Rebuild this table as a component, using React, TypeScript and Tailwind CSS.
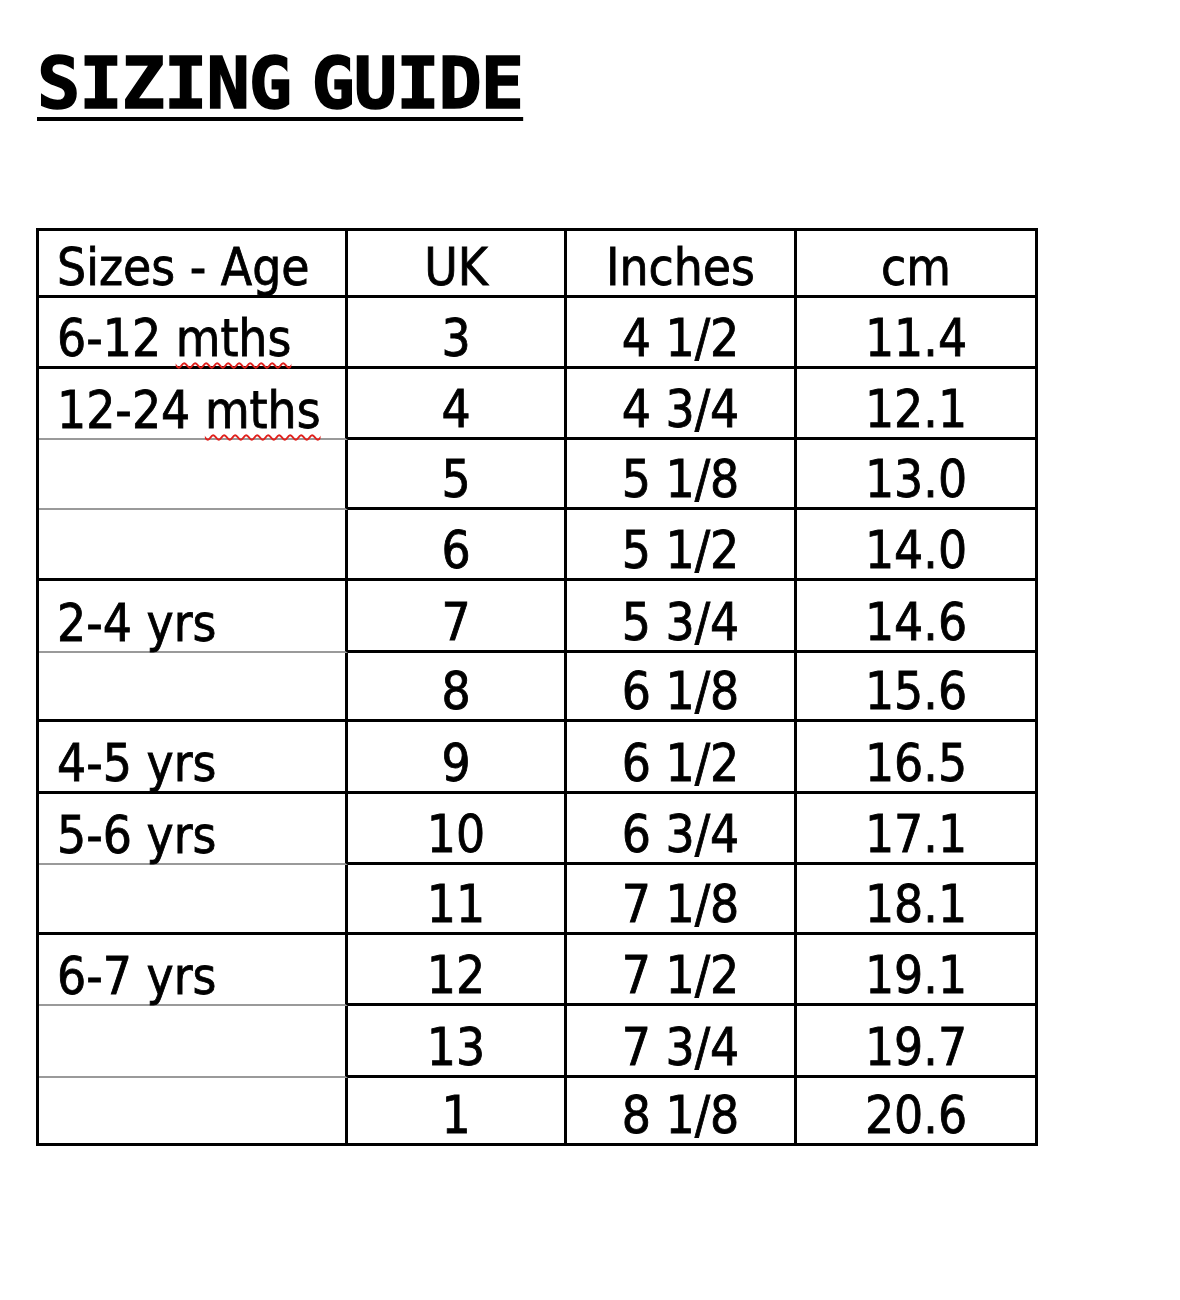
import React from "react";

type Row = {
  age?: string;
  uk: string;
  inches: string;
  cm: string;
  h: number;
  soft?: boolean; // grey line under the age cell
};

const rows: Row[] = [
  { age: "6-12 mths", uk: "3", inches: "4 1/2", cm: "11.4", h: 71 },
  { age: "12-24 mths", uk: "4", inches: "4 3/4", cm: "12.1", h: 71, soft: true },
  { uk: "5", inches: "5 1/8", cm: "13.0", h: 70, soft: true },
  { uk: "6", inches: "5 1/2", cm: "14.0", h: 71 },
  { age: "2-4 yrs", uk: "7", inches: "5 3/4", cm: "14.6", h: 72, soft: true },
  { uk: "8", inches: "6 1/8", cm: "15.6", h: 69 },
  { age: "4-5 yrs", uk: "9", inches: "6 1/2", cm: "16.5", h: 72 },
  { age: "5-6 yrs", uk: "10", inches: "6 3/4", cm: "17.1", h: 71, soft: true },
  { uk: "11", inches: "7 1/8", cm: "18.1", h: 70 },
  { age: "6-7 yrs", uk: "12", inches: "7 1/2", cm: "19.1", h: 71, soft: true },
  { uk: "13", inches: "7 3/4", cm: "19.7", h: 72, soft: true },
  { uk: "1", inches: "8 1/8", cm: "20.6", h: 68 },
];

function AgeLabel({ text }: { text: string }) {
  const idx = text.indexOf("mths");
  if (idx < 0) return <span>{text}</span>;
  return (
    <span>
      {text.slice(0, idx)}
      <span className="underline decoration-wavy decoration-[#e0201c] decoration-[2px] underline-offset-[6px] [text-decoration-skip-ink:none]">
        mths
      </span>
    </span>
  );
}

const cell = "flex items-end pb-[2px] border-r-[3px] border-black box-border";

export default function App() {
  return (
    <div
      className="min-h-[1300px] w-[1180px] bg-white text-black"
      style={{ fontFamily: '"DejaVu Sans Condensed", "DejaVu Sans", sans-serif' }}
    >
      <div className="pt-[47px] pl-[37px]">
        <h1
          className="text-[72px] leading-none font-bold tracking-[-1px] [word-spacing:-22px] [-webkit-text-stroke:1.5px_black] underline decoration-[4px] underline-offset-[9px] inline-block"
          style={{ fontFamily: '"DejaVu Sans Mono", monospace' }}
        >
          SIZING GUIDE
        </h1>
      </div>

      <div className="mt-[109px] ml-[36px] w-[1002px] border-l-[3px] border-t-[3px] border-black text-[51px] leading-none [-webkit-text-stroke:0.8px_black]">
        <div className="flex h-[67px]">
          <div className={`${cell} w-[309px] pl-[18px] border-b-[3px]`}>Sizes - Age</div>
          <div className={`${cell} w-[219px] justify-center border-b-[3px]`}>UK</div>
          <div className={`${cell} w-[230px] justify-center border-b-[3px]`}>Inches</div>
          <div className={`${cell} w-[241px] justify-center border-b-[3px]`}>cm</div>
        </div>
        {rows.map((r, i) => (
          <div key={i} className="flex" style={{ height: r.h }}>
            <div
              className={`${cell} w-[309px] pl-[18px] whitespace-nowrap ${
                r.soft ? "border-b-[2px] border-b-[#9a9a9a]" : "border-b-[3px]"
              }`}
            >
              {r.age ? <AgeLabel text={r.age} /> : null}
            </div>
            <div className={`${cell} w-[219px] justify-center border-b-[3px]`}>{r.uk}</div>
            <div className={`${cell} w-[230px] justify-center border-b-[3px]`}>{r.inches}</div>
            <div className={`${cell} w-[241px] justify-center border-b-[3px]`}>{r.cm}</div>
          </div>
        ))}
      </div>
    </div>
  );
}
